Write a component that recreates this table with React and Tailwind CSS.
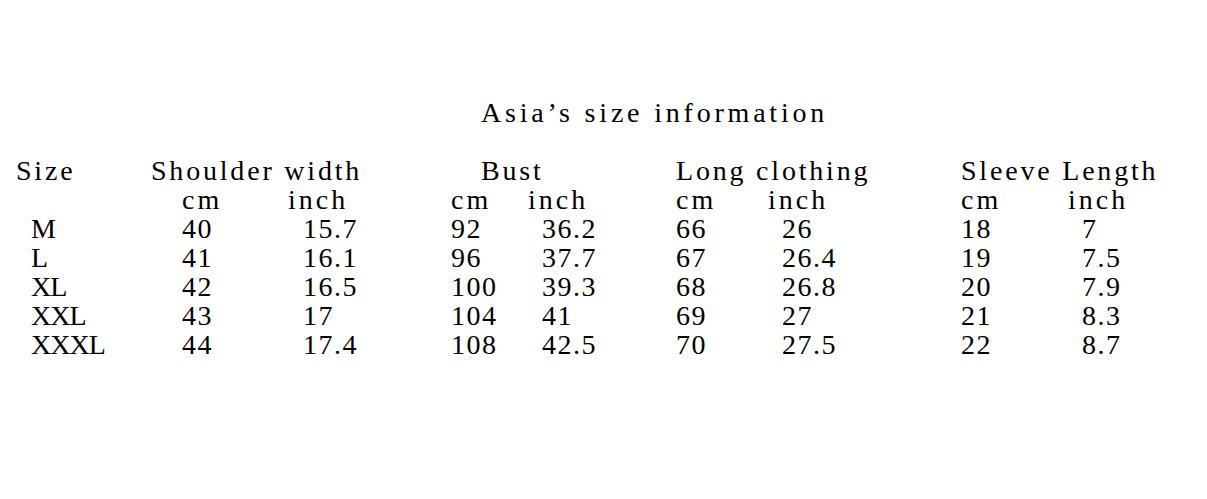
import React from 'react';

const rows = [
    ['M', '40', '15.7', '92', '36.2', '66', '26', '18', '7'],
    ['L', '41', '16.1', '96', '37.7', '67', '26.4', '19', '7.5'],
    ['XL', '42', '16.5', '100', '39.3', '68', '26.8', '20', '7.9'],
    ['XXL', '43', '17', '104', '41', '69', '27', '21', '8.3'],
    ['XXXL', '44', '17.4', '108', '42.5', '70', '27.5', '22', '8.7'],
];

const cols = 'grid grid-cols-[166px_106px_163px_77px_148px_92px_193px_107px_1fr] pl-[16px]';

export default function App() {
    return (
        <div
            className="w-[1207px] h-[499px] bg-white text-black text-[28px] leading-[29px] pt-[98px]"
            style={{ fontFamily: '"Liberation Serif", "Times New Roman", serif' }}
        >
            {/* Title */}
            <div className="pl-[481px] tracking-[3.8px]">Asia’s size information</div>

            <div className="h-[29px]" />

            {/* Column headers */}
            <div className="grid grid-cols-[135px_330px_195px_285px_1fr] pl-[16px] tracking-[2.8px]">
                <div>Size</div>
                <div>Shoulder width</div>
                <div>Bust</div>
                <div>Long clothing</div>
                <div>Sleeve Length</div>
            </div>

            {/* Units */}
            <div className={cols + ' tracking-[3px]'}>
                <div />
                <div>cm</div>
                <div>inch</div>
                <div>cm</div>
                <div>inch</div>
                <div>cm</div>
                <div>inch</div>
                <div>cm</div>
                <div>inch</div>
            </div>

            {/* Data */}
            {rows.map((r) => (
                <div key={r[0]} className={cols + ' tracking-[1.5px]'}>
                    <div className="pl-[15px] tracking-[-1px]">{r[0]}</div>
                    <div>{r[1]}</div>
                    <div className="pl-[15px]">{r[2]}</div>
                    <div>{r[3]}</div>
                    <div className="pl-[14px]">{r[4]}</div>
                    <div>{r[5]}</div>
                    <div className="pl-[14px]">{r[6]}</div>
                    <div>{r[7]}</div>
                    <div className="pl-[14px]">{r[8]}</div>
                </div>
            ))}
        </div>
    );
}
